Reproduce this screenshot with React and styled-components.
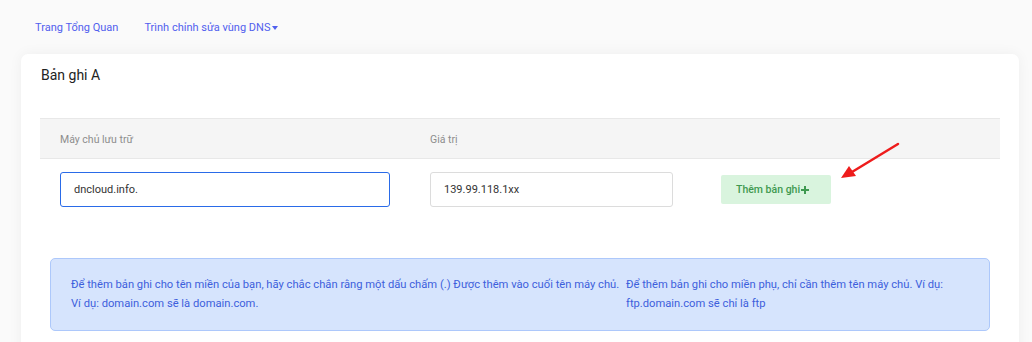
import React from "react";
import styled, { createGlobalStyle } from "styled-components";

const Global = createGlobalStyle`
  html, body { margin: 0; padding: 0; background: #fafafa; }
  body { font-family: Roboto, "Noto Sans", Arial, sans-serif; }
  * { box-sizing: border-box; }
`;

const Page = styled.div`
  position: relative;
  width: 1032px;
  height: 342px;
  overflow: hidden;
  padding: 0 13px 0 21px;
`;

const Nav = styled.nav`
  display: flex;
  gap: 26px;
  height: 54px;
  padding: 19px 0 0 14px;
`;

const NavLink = styled.a`
  color: #5160ee;
  font-size: 11px;
  text-decoration: none;
  display: inline-flex;
  align-items: center;
  height: 17px;
`;

const Caret = styled.span`
  display: inline-block;
  margin-left: 2px;
  width: 0;
  height: 0;
  border-left: 3.5px solid transparent;
  border-right: 3.5px solid transparent;
  border-top: 4px solid #5160ee;
`;

const Card = styled.section`
  background: #fff;
  border-radius: 7px;
  box-shadow: 0 0 14px rgba(0, 0, 0, 0.05);
  padding: 12px 19px 40px 19px;
  height: 320px;
`;

const Title = styled.h2`
  margin: 0;
  font-size: 14px;
  font-weight: 400;
  color: #222;
  line-height: 18px;
  padding-left: 1px;
`;

const Table = styled.div`
  margin-top: 34px;
`;

const HeadRow = styled.div`
  display: grid;
  grid-template-columns: 370px 283px 1fr;
  height: 41px;
  background: #f5f5f5;
  border-top: 1px solid #e8e8e8;
  border-bottom: 1px solid #e8e8e8;
  align-items: center;
`;

const HeadCell = styled.div`
  padding-left: 20px;
  font-size: 10.5px;
  color: #8d8d8d;
  padding-top: 1px;
`;

const BodyRow = styled.div`
  display: grid;
  grid-template-columns: 370px 283px 1fr;
  padding-top: 13px;
  align-items: center;
`;

const Cell = styled.div`
  padding: 0 20px;
`;

const Input = styled.div`
  height: 35px;
  border: 1px solid ${(p) => (p.$focus ? "#2a6be8" : "#dcdcdc")};
  border-radius: 3px;
  display: flex;
  align-items: center;
  padding-left: 13px;
  font-size: 11px;
  color: #333;
  background: #fff;
`;

const AddButton = styled.button`
  margin-left: 28px;
  width: 110px;
  height: 29px;
  background: #d9f4de;
  border: none;
  border-radius: 2px;
  color: #3f9950;
  font-family: inherit;
  font-size: 10.5px;
  font-weight: 500;
  display: flex;
  align-items: center;
  padding-left: 15px;
`;

const Plus = styled.svg`
  width: 10px;
  height: 10px;
`;

const Alert = styled.div`
  margin: 51px 10px 0 10px;
  background: #d6e4fd;
  border: 1px solid #adc8fb;
  border-radius: 5px;
  padding: 16px 20px 17px 20px;
  display: grid;
  grid-template-columns: 555px 1fr;
  color: #3d5fdc;
  font-size: 11.2px;
  line-height: 19px;
`;

const AlertText = styled.p`
  margin: 0;
  white-space: nowrap;
`;

const Arrow = styled.svg`
  position: absolute;
  left: 830px;
  top: 135px;
  width: 80px;
  height: 55px;
  pointer-events: none;
`;

export default function App() {
  return (
    <>
      <Global />
      <Page>
        <Nav>
          <NavLink href="#">Trang Tổng Quan</NavLink>
          <NavLink href="#">
            Trình chỉnh sửa vùng DNS
            <Caret />
          </NavLink>
        </Nav>
        <Card>
          <Title>Bản ghi A</Title>
          <Table>
            <HeadRow>
              <HeadCell>Máy chủ lưu trữ</HeadCell>
              <HeadCell>Giá trị</HeadCell>
              <HeadCell />
            </HeadRow>
            <BodyRow>
              <Cell>
                <Input $focus>dncloud.info.</Input>
              </Cell>
              <Cell>
                <Input>139.99.118.1xx</Input>
              </Cell>
              <div>
                <AddButton>
                  Thêm bản ghi
                  <Plus viewBox="0 0 10 10">
                    <path d="M5 1v8M1 5h8" stroke="#3f9950" strokeWidth="2" />
                  </Plus>
                </AddButton>
              </div>
            </BodyRow>
          </Table>
          <Alert>
            <AlertText>
              Để thêm bản ghi cho tên miền của bạn, hãy chắc chắn rằng một dấu chấm (.) Được thêm vào cuối tên máy chủ.
              <br />
              Ví dụ: domain.com sẽ là domain.com.
            </AlertText>
            <AlertText>
              Để thêm bản ghi cho miền phụ, chỉ cần thêm tên máy chủ. Ví dụ:
              <br />
              ftp.domain.com sẽ chỉ là ftp
            </AlertText>
          </Alert>
        </Card>
        <Arrow viewBox="830 135 80 55">
          <line x1="898" y1="144" x2="852" y2="172" stroke="#ee1c1c" strokeWidth="2.5" strokeLinecap="round" />
          <polygon points="841,178 849,166 856,176" fill="#ee1c1c" />
        </Arrow>
      </Page>
    </>
  );
}
